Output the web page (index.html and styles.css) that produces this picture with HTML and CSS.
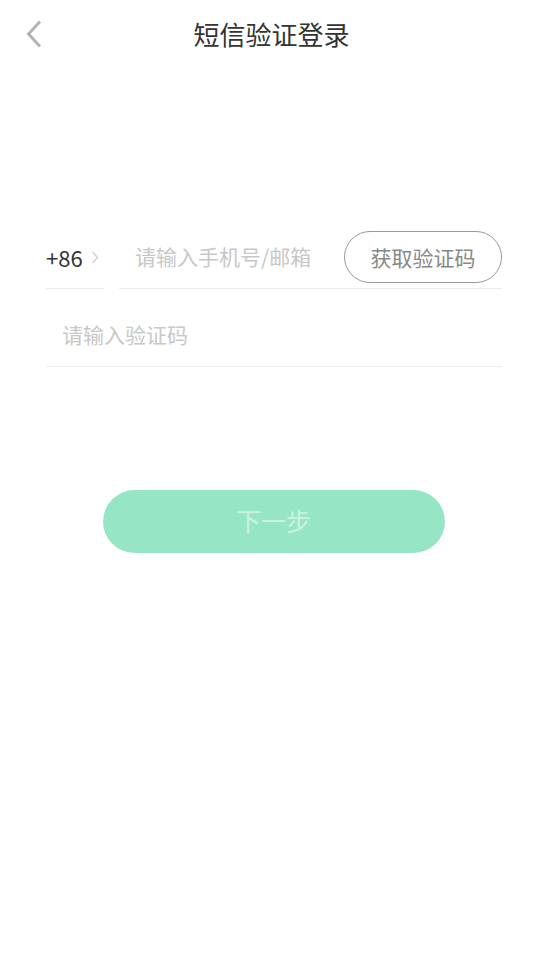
FILE: index.html
```html
<!DOCTYPE html>
<html lang="zh-CN">
<head>
<meta charset="utf-8">
<title>短信验证登录</title>
<link rel="stylesheet" href="styles.css">
</head>
<body>
<div class="page">
  <header class="topbar">
    <span class="back">
      <svg width="16" height="28" viewBox="0 0 16 28"><polyline points="14,1.5 2.5,14 14,26.5" fill="none" stroke="#b3b3b3" stroke-width="3"/></svg>
    </span>
    <h1 class="title">短信验证登录</h1>
  </header>
  <main class="form">
    <div class="row row-phone">
      <div class="country">
        <span class="code">+86</span>
        <svg class="arrow" width="8" height="13" viewBox="0 0 8 13"><polyline points="1.5,1 6.5,6.5 1.5,12" fill="none" stroke="#d4d4d4" stroke-width="1.6"/></svg>
      </div>
      <div class="phone">
        <span class="placeholder">请输入手机号/邮箱</span>
        <button class="getcode">获取验证码</button>
      </div>
    </div>
    <div class="row row-code">
      <span class="placeholder">请输入验证码</span>
    </div>
    <div class="actions">
      <button class="next">下一步</button>
    </div>
  </main>
</div>
</body>
</html>
```
FILE: styles.css
```css
* { box-sizing: border-box; }
html, body { margin: 0; padding: 0; background: #fff; }
body { font-family: "Noto Sans CJK SC", "Noto Sans", sans-serif; color: #333; }
.page { width: 549px; height: 977px; }
.topbar {
  position: relative;
  height: 70px;
  display: flex;
  align-items: center;
  justify-content: center;
  padding: 0 6px 3px 0;
}
.back { position: absolute; left: 26px; top: 20px; display: block; width: 16px; height: 28px; }
.back svg { display: block; }
.title { margin: 0; font-size: 26px; font-weight: 400; color: #333; line-height: 30px; }
.form { padding: 161px 47px 0 46px; }
.row-phone { display: flex; align-items: stretch; height: 58px; }
.country {
  width: 58px;
  display: flex;
  align-items: center;
  border-bottom: 1px solid #ececec;
}
.code { font-size: 22px; color: #333; line-height: 1; margin-top: -6px; }
.arrow { margin-left: 8px; margin-top: -4px; display: block; }
.phone {
  flex: 1;
  margin-left: 15px;
  display: flex;
  align-items: flex-start;
  justify-content: space-between;
  border-bottom: 1px solid #ececec;
}
.placeholder { font-size: 21px; color: #c8c8c8; line-height: 22px; display: block; }
.phone .placeholder { padding-left: 16px; margin-top: 14px; }
.getcode {
  width: 158px;
  height: 52px;
  border: 1px solid #999;
  border-radius: 26px;
  background: #fff;
  font-family: inherit;
  font-size: 21px;
  color: #888;
  padding: 0;
}
.row-code {
  display: flex;
  height: 78px;
  padding: 34px 0 21px 16px;
  border-bottom: 1px solid #ececec;
}
.actions { display: flex; justify-content: center; padding-top: 123px; padding-right: 1px; }
.next {
  width: 342px;
  height: 63px;
  border: none;
  border-radius: 32px;
  background: #96e6c6;
  color: #cbf2e1;
  font-family: inherit;
  font-size: 25px;
  padding: 0 0 3px;
}
```
